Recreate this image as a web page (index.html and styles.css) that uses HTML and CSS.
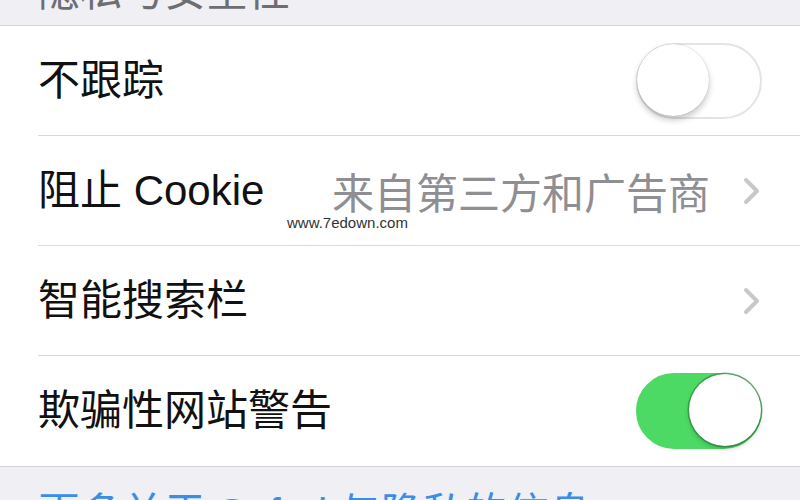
FILE: index.html
```html
<!DOCTYPE html>
<html lang="zh-CN">
<head>
<meta charset="utf-8">
<title>隐私与安全性</title>
<link rel="stylesheet" href="styles.css">
</head>
<body>
<div class="screen">
  <div class="section-header"><span class="header-text">隐私与安全性</span></div>
  <div class="list">
    <div class="row">
      <div class="row-inner">
        <span class="label">不跟踪</span>
        <span class="toggle"><span class="knob"></span></span>
      </div>
    </div>
    <div class="row">
      <div class="row-inner">
        <span class="label">阻止 Cookie</span>
        <span class="right">
          <span class="value">来自第三方和广告商</span>
          <svg class="chevron" viewBox="0 0 20 30" width="20" height="30"><path d="M4 4 L15 15 L4 26" fill="none" stroke="#c7c7cc" stroke-width="4" stroke-linecap="round" stroke-linejoin="round"/></svg>
        </span>
      </div>
    </div>
    <div class="row">
      <div class="row-inner">
        <span class="label">智能搜索栏</span>
        <span class="right">
          <svg class="chevron" viewBox="0 0 20 30" width="20" height="30"><path d="M4 4 L15 15 L4 26" fill="none" stroke="#c7c7cc" stroke-width="4" stroke-linecap="round" stroke-linejoin="round"/></svg>
        </span>
      </div>
    </div>
    <div class="row last">
      <div class="row-inner">
        <span class="label">欺骗性网站警告</span>
        <span class="toggle on"><span class="knob"></span></span>
      </div>
    </div>
  </div>
  <div class="footer"><span class="footer-link">更多关于 Safari 与隐私的信息</span></div>
  <div class="watermark">www.7edown.com</div>
</div>
</body>
</html>
```

FILE: styles.css
```css
html, body {
  margin: 0;
  padding: 0;
  background: #efeff4;
}
.screen {
  position: relative;
  width: 800px;
  height: 500px;
  overflow: hidden;
  background: #efeff4;
  font-family: "Liberation Sans", "Noto Sans CJK SC", sans-serif;
  font-size: 42px;
  color: #111;
}
.section-header {
  height: 25px;
  overflow: hidden;
  padding-left: 38px;
  border-bottom: 1px solid #d4d4d8;
}
.header-text {
  display: block;
  line-height: 42px;
  margin-top: -29px;
  color: #6d6d72;
}
.list {
  background: #fff;
  border-bottom: 1px solid #d4d4d8;
}
.row {
  padding-left: 38px;
}
.row-inner {
  height: 109px;
  display: flex;
  align-items: center;
  justify-content: space-between;
  padding-right: 38px;
  border-bottom: 1px solid #d9d9dc;
}
.row.last .row-inner {
  border-bottom: none;
  height: 110px;
}
.label {
  line-height: 42px;
}
.right {
  display: flex;
  align-items: center;
}
.value {
  color: #8e8e93;
  margin-right: 32px;
}
.chevron {
  display: block;
}
.toggle {
  position: relative;
  width: 122px;
  height: 72px;
  border: 2px solid #e4e4e6;
  border-radius: 38px;
  background: #fff;
}
.toggle .knob {
  position: absolute;
  top: -1px;
  left: -1px;
  width: 72px;
  height: 72px;
  border-radius: 50%;
  background: #fff;
  box-shadow: 0 4px 6px rgba(0,0,0,0.22), 0 0 1px rgba(0,0,0,0.25);
}
.toggle.on {
  background: #4cd964;
  border-color: #4cd964;
}
.toggle.on .knob {
  left: auto;
  right: -1px;
  box-shadow: 0 3px 5px rgba(0,0,0,0.18), 0 0 0 1.5px rgba(40,120,60,0.55);
}
.footer {
  padding-left: 38px;
  padding-top: 23px;
}
.footer-link {
  color: #3a8ee6;
  line-height: 42px;
}
.watermark {
  position: absolute;
  left: 287px;
  top: 214px;
  font-family: "Liberation Sans", Arial, sans-serif;
  font-size: 15px;
  color: #333;
}
```
